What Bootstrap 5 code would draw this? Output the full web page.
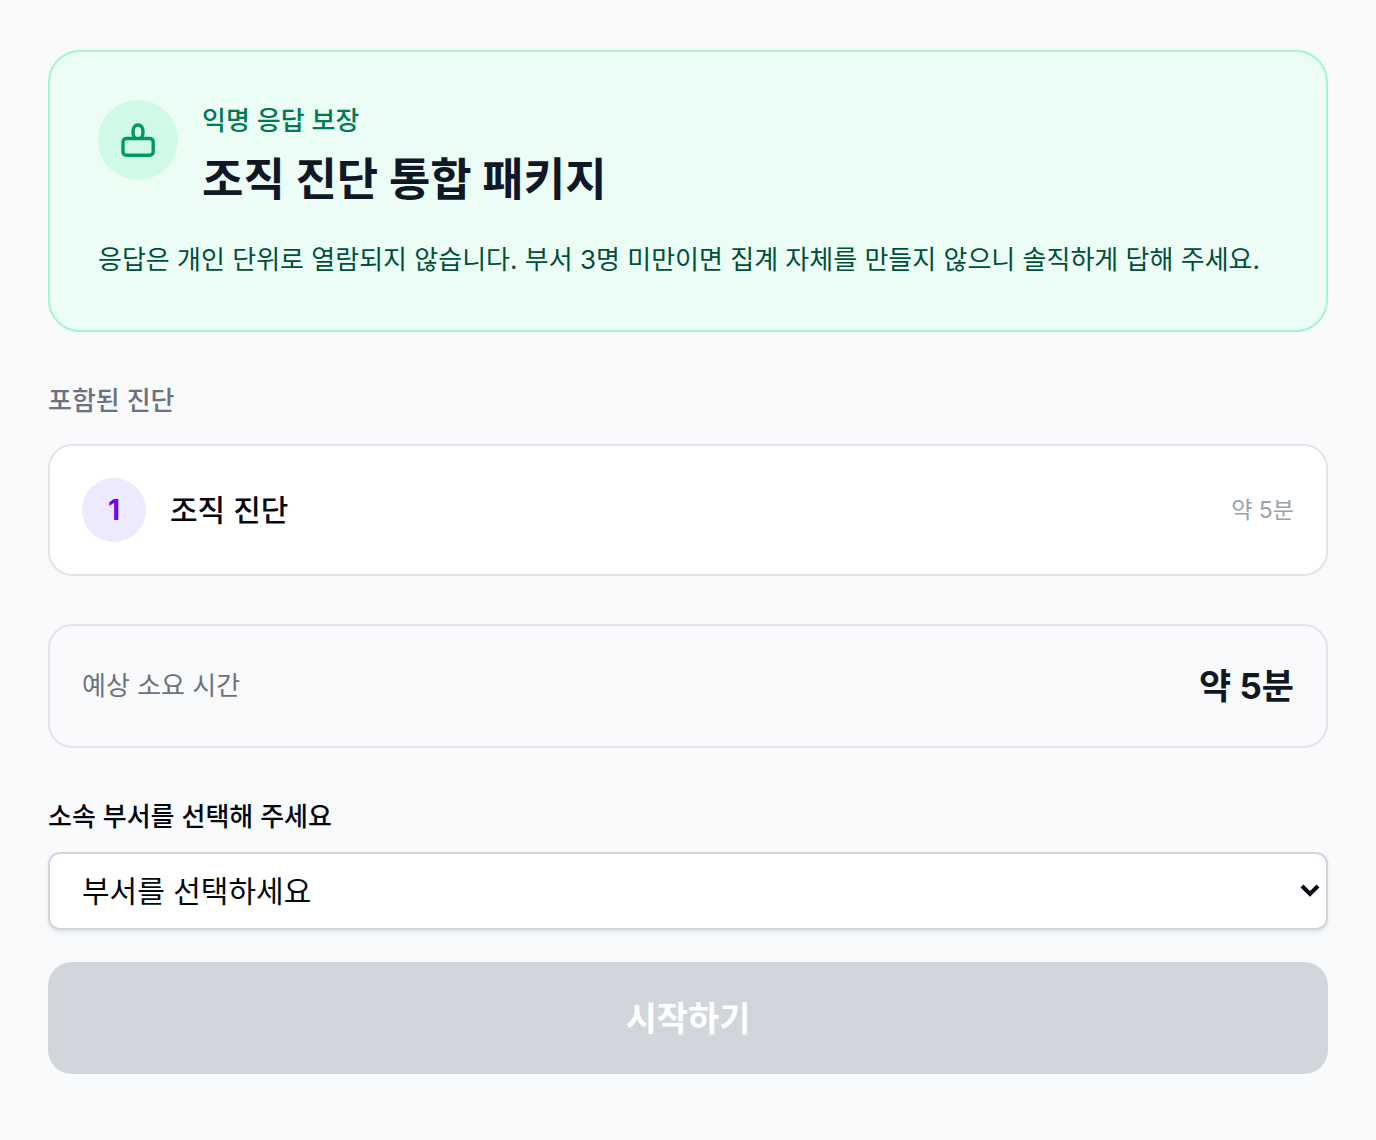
<!DOCTYPE html>
<html lang="ko">
<head>
<meta charset="utf-8">
<meta name="viewport" content="width=device-width, initial-scale=1">
<title>조직 진단 통합 패키지</title>
<link href="https://cdn.jsdelivr.net/npm/bootstrap@5.3.0/dist/css/bootstrap.min.css" rel="stylesheet">
<style>
body{background:#f9fafc;color:#030712;font-family:Inter,"Noto Sans CJK KR",sans-serif;font-size:26px;line-height:40px}
.page{padding:50px 48px 66px}
.notice{background:#ecfdf5;border:2px solid #a4f4cf;border-radius:32px;padding:48px}
.notice-icon{width:80px;height:80px;background:#d0fae5;color:#009966}
.notice-tag{color:#007a55;font-weight:500;line-height:42px}
.notice-title{color:#101828;font-size:45px;line-height:60px;font-weight:700;margin-top:8px}
.notice-text{color:#004f3b;line-height:44px;margin-top:28px}
.section-title{color:#6a7282;font-size:26px;line-height:42px;font-weight:500;margin:48px 0 22px}
.panel{border:2px solid #e2e4e9;border-radius:24px;padding:32px}
.step-number{width:64px;height:64px;background:#ede9fe;color:#7008e7;font-size:28px;font-weight:700}
.step-name{font-size:30px;font-weight:500}
.step-time{color:#99a1af;font-size:23px}
.total{margin-top:48px;color:#6a7282}
.total-time{color:#101828;font-size:35px;line-height:56px;font-weight:700}
.dept-label{line-height:42px;margin:48px 0 14px;font-weight:500}
.dept-select{height:78px;border:2px solid #d1d5dc;border-radius:12px;padding:0 32px;font-size:30px;color:#030712;box-shadow:0 2px 4px #0000001a;appearance:none}
.chevron{right:8px;top:30px;pointer-events:none}
.start{height:112px;margin-top:32px;border-radius:24px;font-size:34px;font-weight:600}
.start:disabled{background:#d1d5dc;color:#fff;border:0;opacity:1}
</style>
<script defer src="https://cdn.jsdelivr.net/npm/bootstrap@5.3.0/dist/js/bootstrap.bundle.min.js"></script>
</head>
<body>
<main class="page container-fluid">
  <section class="notice">
    <div class="d-flex gap-4">
      <div class="notice-icon rounded-circle d-flex align-items-center justify-content-center flex-shrink-0">
        <svg width="40" height="40" viewBox="0 0 40 40" fill="none" stroke="currentColor" stroke-width="3.4" aria-hidden="true"><rect x="5" y="18.5" width="30.200" height="16.800" rx="3.400"/><path d="M17 18.500C15.500 17 15 15 15 11.500C15 7.500 17 5 20 5s5 2.500 5 6.500C25 15 24.500 17 23 18.500"/></svg>
      </div>
      <div>
        <p class="notice-tag mb-0">익명 응답 보장</p>
        <h1 class="notice-title mb-0">조직 진단 통합 패키지</h1>
      </div>
    </div>
    <p class="notice-text mb-0">응답은 개인 단위로 열람되지 않습니다. 부서 3명 미만이면 집계 자체를 만들지 않으니 솔직하게 답해 주세요.</p>
  </section>
  <h2 class="section-title">포함된 진단</h2>
  <section class="panel bg-white d-flex align-items-center gap-4">
    <span class="step-number rounded-circle d-flex align-items-center justify-content-center">1</span>
    <span class="step-name flex-grow-1">조직 진단</span>
    <span class="step-time">약 5분</span>
  </section>
  <section class="panel total d-flex align-items-center justify-content-between">
    <span>예상 소요 시간</span>
    <strong class="total-time">약 5분</strong>
  </section>
  <form>
    <label class="dept-label d-block" for="dept">소속 부서를 선택해 주세요</label>
    <div class="position-relative">
      <select class="dept-select w-100 bg-white d-block" id="dept"><option>부서를 선택하세요</option></select>
      <svg class="chevron position-absolute" width="20" height="16" viewBox="0 0 20 16" fill="none" stroke="#030712" stroke-width="4" aria-hidden="true"><path d="M2 4l8 8 8-8"/></svg>
    </div>
    <button class="start btn w-100 d-block" type="submit" disabled>시작하기</button>
  </form>
</main>
</body>
</html>
